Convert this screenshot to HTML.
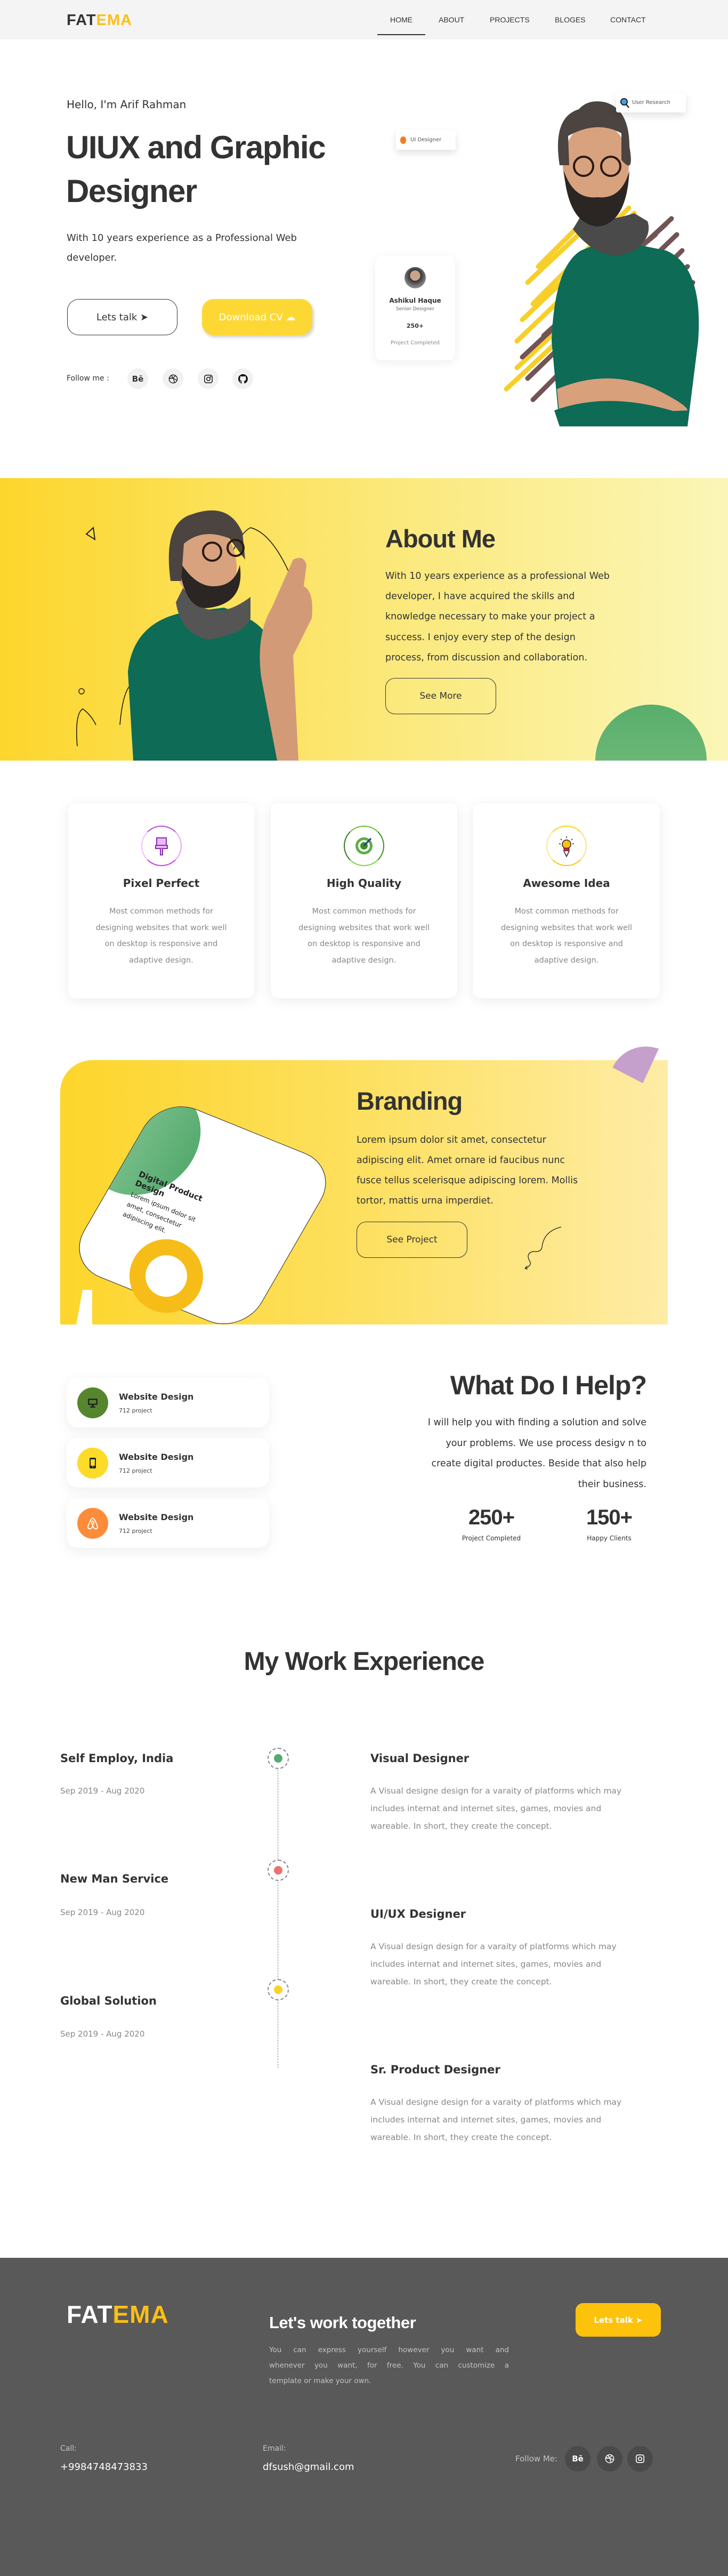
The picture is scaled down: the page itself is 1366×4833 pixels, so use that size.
<!DOCTYPE html>
<html><head><meta charset="utf-8">
<style>
*{box-sizing:border-box;margin:0;padding:0}
body{width:1366px;height:4833px;position:relative;background:#fff;font-family:"DejaVu Sans","Liberation Sans",sans-serif;color:#333;overflow:hidden}
.a{position:absolute}
.h{font-family:"Liberation Sans",sans-serif;font-weight:bold;color:#333;letter-spacing:-1px}
.nav a{position:absolute;top:29px;font-size:14px;color:#333;text-decoration:none;font-family:"Liberation Sans",sans-serif}
.btn{position:absolute;border:1.5px solid #333;border-radius:22px;display:flex;align-items:center;justify-content:center;font-size:18px;color:#333}
.soc{position:absolute;width:39px;height:39px;border-radius:50%;background:#f1f1f1;display:flex;align-items:center;justify-content:center;font-weight:bold;font-size:15px}
.card{position:absolute;background:#fff;border-radius:14px;box-shadow:0 4px 24px rgba(0,0,0,.08);text-align:center}
.card h3{position:absolute;left:0;right:0;top:138px;font-size:20px;font-family:"DejaVu Sans",sans-serif;font-weight:bold;color:#333}
.card p{position:absolute;left:0;right:0;top:188px;font-size:14.5px;line-height:30.5px;color:#888;white-space:nowrap}
.ring{position:absolute;left:137px;top:42px;width:76px;height:76px;border-radius:50%;border:2px solid}
.svc{position:absolute;left:125px;width:380px;height:93px;background:#fff;border-radius:20px;box-shadow:0 6px 24px rgba(0,0,0,.07)}
.svc .ic{position:absolute;left:20px;top:18px;width:58px;height:58px;border-radius:50%;display:flex;align-items:center;justify-content:center}
.svc b{position:absolute;left:98px;top:26px;font-size:16px;color:#333}
.svc span{position:absolute;left:98px;top:55px;font-size:11px;color:#444}
.tl{font-size:21px;font-weight:bold;color:#333;position:absolute}
.dt{font-size:15px;color:#888;position:absolute}
.ds{font-size:15.5px;line-height:33px;color:#888;position:absolute;white-space:nowrap}
.dot{position:absolute;left:502px;width:40px;height:40px;border-radius:50%;border:2px dashed #888;background:#fff}
.dot i{position:absolute;left:10px;top:10px;width:16px;height:16px;border-radius:50%}
.j{text-align:justify;text-align-last:justify}
</style></head><body>

<!-- NAV -->
<div class="a" style="left:0;top:0;width:1366px;height:74px;background:#f4f4f4"></div>
<div class="a" style="left:125px;top:22px;font-family:'Liberation Sans',sans-serif;font-weight:900;font-size:29px;letter-spacing:1px;color:#333;line-height:32px">FAT<span style="color:#fbbf16">EMA</span></div>
<div class="nav">
<a style="left:732px">HOME</a><a style="left:823px">ABOUT</a><a style="left:919px">PROJECTS</a><a style="left:1041px">BLOGES</a><a style="left:1145px">CONTACT</a>
</div>
<div class="a" style="left:708px;top:64px;width:90px;height:2px;background:#333"></div>

<!-- HERO -->
<div class="a" style="left:125px;top:184px;font-size:20px;color:#333">Hello, I'm Arif Rahman</div>
<div class="a h" style="left:124px;top:236px;font-size:60px;line-height:82px;letter-spacing:-1.5px">UIUX and Graphic<br>Designer</div>
<div class="a" style="left:125px;top:428px;font-size:18px;line-height:37px;color:#333;white-space:nowrap">With 10 years experience as a Professional Web<br>developer.</div>
<div class="btn" style="left:126px;top:561px;width:207px;height:68px">Lets talk ➤</div>
<div class="btn" style="left:379px;top:561px;width:207px;height:68px;border:none;background:#fdd835;color:#fff;box-shadow:3px 4px 6px rgba(0,0,0,.18)">Download CV ☁</div>
<div class="a" style="left:125px;top:702px;font-size:14px;color:#333">Follow me :</div>
<div class="soc" style="left:239px;top:691px">Bē</div>
<div class="soc" style="left:305px;top:691px"><svg width="18" height="18" viewBox="0 0 20 20" fill="none" stroke="#222" stroke-width="1.6"><circle cx="10" cy="10" r="8.5"/><path d="M2 8c5 0 11 1 16 5M6 2.5c4 5 6 10 7 16M15 3c-3 4-8 6-13 6"/></svg></div>
<div class="soc" style="left:371px;top:691px"><svg width="18" height="18" viewBox="0 0 20 20" fill="none" stroke="#222" stroke-width="1.8"><rect x="2" y="2" width="16" height="16" rx="4"/><circle cx="10" cy="10" r="3.6"/><circle cx="14.5" cy="5.5" r=".6" fill="#222"/></svg></div>
<div class="soc" style="left:436px;top:691px"><svg width="18" height="18" viewBox="0 0 16 16"><path fill="#111" d="M8 0a8 8 0 00-2.5 15.6c.4 0 .5-.2.5-.4v-1.5c-2.2.5-2.7-1-2.7-1-.4-.9-.9-1.200-.9-1.2-.7-.5.1-.5.1-.5.8.1 1.2.8 1.2.8.7 1.3 1.9.9 2.3.7.1-.5.3-.9.5-1.1-1.8-.2-3.6-.9-3.6-4 0-.9.3-1.6.8-2.1-.1-.2-.4-1 .1-2.1 0 0 .7-.2 2.2.8a7.4 7.4 0 014 0c1.5-1 2.2-.8 2.2-.8.4 1.1.2 1.9.1 2.1.5.6.8 1.3.8 2.1 0 3.1-1.9 3.8-3.6 4 .3.3.6.8.6 1.5v2.2c0 .2.1.5.6.4A8 8 0 008 0z"/></svg></div>

<!-- hero person -->
<svg class="a" style="left:850px;top:170px" width="480" height="630" viewBox="0 0 480 630">
<g stroke-linecap="round" stroke-width="9" opacity=".95">
<path d="M130 430L340 230M120 470L350 250M150 400L330 220M140 360L310 200M160 330L300 190M120 520L260 390M100 560L240 430" stroke="#f8cd1e"/>
<path d="M130 500L410 240M140 540L420 270M150 580L430 300M170 460L400 250M200 420L380 270M280 460L440 330M300 500L450 360" stroke="#6b4a4e"/>
</g>
<path d="M200 630L185 470Q190 330 240 300L290 280Q320 290 350 290L400 300Q470 330 460 470L440 630Z" fill="#0d6b56"/>
<path d="M195 560Q290 520 380 560Q440 590 440 600L200 610Z" fill="#d9a07c"/>
<path d="M190 600Q300 560 440 610L440 630L200 630Z" fill="#0d6b56"/>
<path d="M225 260Q280 330 340 300Q375 275 365 245L340 230Q280 250 240 235Z" fill="#4a4a4a"/>
<ellipse cx="268" cy="140" rx="62" ry="82" fill="#d8a27f"/>
<path d="M208 150Q216 250 271 255Q326 250 331 150Q316 205 271 200Q226 205 208 150Z" fill="#2b2523"/>
<path d="M200 140Q186 50 236 35Q254 15 286 22Q331 35 331 105Q341 160 316 130L316 80Q271 55 216 85L218 140Z" fill="#4b4440"/>
<circle cx="245" cy="142" r="18" fill="none" stroke="#2a1a12" stroke-width="4"/>
<circle cx="296" cy="142" r="18" fill="none" stroke="#2a1a12" stroke-width="4"/>
</svg>

<!-- hero floating cards -->
<div class="a" style="left:743px;top:244px;width:112px;height:37px;background:#fff;border-radius:4px;box-shadow:0 6px 14px rgba(0,0,0,.12);font-size:10px;color:#555;display:flex;align-items:center;padding-left:8px"><i style="width:11px;height:14px;border-radius:50%;background:#f47a20;margin-right:8px;display:inline-block"></i>UI Designer</div>
<div class="a" style="left:1156px;top:174px;width:131px;height:37px;background:#fff;border-radius:4px;box-shadow:0 6px 14px rgba(0,0,0,.12);font-size:10px;color:#555;display:flex;align-items:center;padding-left:8px"><svg width="18" height="20" viewBox="0 0 18 20" style="margin-right:4px"><circle cx="7" cy="8" r="6" fill="#3fa1e8" stroke="#222" stroke-width="2"/><path d="M11 13l5 6" stroke="#222" stroke-width="2.5"/></svg>User Research</div>
<div class="a" style="left:704px;top:480px;width:150px;height:196px;background:#fff;border-radius:12px;box-shadow:0 4px 18px rgba(0,0,0,.07);text-align:center">
<div style="width:40px;height:40px;border-radius:50%;background:radial-gradient(circle at 50% 40%,#c9a38a 0 30%,#333 32%,#888 70%);margin:21px auto 0"></div>
<div style="font-size:12px;font-weight:bold;margin-top:16px">Ashikul Haque</div>
<div style="font-size:9px;color:#666;margin-top:4px">Senior Designer</div>
<div style="font-size:11px;font-weight:bold;margin-top:20px">250+</div>
<div style="font-size:10px;color:#888;margin-top:20px">Project Completed</div>
</div>

<!-- ABOUT -->
<div class="a" style="left:0;top:897px;width:1366px;height:530px;background:linear-gradient(90deg,#fdd62c,#fbe97c 55%,#fbf6b8)"></div>
<svg class="a" style="left:130px;top:940px" width="540" height="487" viewBox="0 0 540 487">
<path d="M45 50L32 62L48 72Z" fill="none" stroke="#222" stroke-width="2"/>
<circle cx="23" cy="357" r="5" fill="none" stroke="#222" stroke-width="1.5"/>
<path d="M15 460Q10 400 25 390Q40 400 50 420M300 110Q320 60 340 50Q380 60 415 140M95 420Q100 360 115 345" fill="none" stroke="#111" stroke-width="1.5"/>
<path d="M120 487L110 320Q120 230 210 210L290 200Q350 220 370 250L400 320L390 487Z" fill="#0d6b56"/>
<path d="M390 487L360 330Q350 250 380 200L420 110Q440 100 445 120L440 160Q460 170 455 220L420 290L430 487Z" fill="#d39a78"/>
<path d="M200 190Q210 250 260 260Q330 250 340 220L340 180Q300 210 270 205Q230 200 215 160Z" fill="#555"/>
<ellipse cx="255" cy="115" rx="58" ry="78" fill="#d8a27f" transform="rotate(-12 255 115)"/>
<path d="M205 110Q215 210 265 200Q330 190 320 120Q310 160 270 160Q235 160 205 110Z" fill="#2b2523"/>
<path d="M190 150Q175 40 230 25Q300 0 325 60L330 110L300 70Q250 50 215 80L210 150Z" fill="#4b4440"/>
<circle cx="268" cy="95" r="17" fill="none" stroke="#2a1a12" stroke-width="4"/>
<circle cx="312" cy="88" r="15" fill="none" stroke="#2a1a12" stroke-width="4"/>
</svg>
<div class="a h" style="left:723px;top:983px;font-size:47px">About Me</div>
<div class="a" style="left:723px;top:1062px;font-size:17.5px;line-height:38.2px;color:#333;white-space:nowrap">With 10 years experience as a professional Web<br>developer, I have acquired the skills and<br>knowledge necessary to make your project a<br>success. I enjoy every step of the design<br>process, from discussion and collaboration.</div>
<div class="btn" style="left:723px;top:1272px;width:208px;height:68px;border-radius:18px;font-size:17px">See More</div>
<div class="a" style="left:1117px;top:1322px;width:209px;height:210px;border-radius:50%;background:linear-gradient(#58ae6c,#7ebf7f);clip-path:inset(0 0 105px 0)"></div>

<!-- FEATURE CARDS -->
<div class="card" style="left:128px;top:1507px;width:349px;height:366px">
<div class="ring" style="border-color:#b84fd6 #e7a3f2 #c042e0 #f0c0f6"></div>
<svg class="a" style="left:160px;top:63px" width="30" height="36" viewBox="0 0 30 36"><rect x="6" y="2" width="18" height="14" fill="#e9b8f5" stroke="#8a2fb0" stroke-width="2"/><rect x="4" y="16" width="22" height="6" fill="#e9b8f5" stroke="#8a2fb0" stroke-width="2"/><path d="M13 22v12h4V22" fill="#e9b8f5" stroke="#8a2fb0" stroke-width="2"/></svg>
<h3>Pixel Perfect</h3>
<p>Most common methods for<br>designing websites that work well<br>on desktop is responsive and<br>adaptive design.</p></div>
<div class="card" style="left:508px;top:1507px;width:350px;height:366px">
<div class="ring" style="border-color:#6bbf3a #3d8f20 #7fd04a #2f7a1a"></div>
<svg class="a" style="left:155px;top:60px" width="40" height="40" viewBox="0 0 40 40"><circle cx="20" cy="20" r="16" fill="#5ab046"/><circle cx="20" cy="20" r="11" fill="#fff"/><circle cx="20" cy="20" r="7" fill="#3e8e2a"/><path d="M20 20L33 6" stroke="#2b3a8a" stroke-width="3"/></svg>
<h3>High Quality</h3>
<p>Most common methods for<br>designing websites that work well<br>on desktop is responsive and<br>adaptive design.</p></div>
<div class="card" style="left:888px;top:1507px;width:350px;height:366px">
<div class="ring" style="border-color:#ffd21a #f7e08a #fbc70a #fde98f"></div>
<svg class="a" style="left:158px;top:58px" width="34" height="44" viewBox="0 0 34 44"><path d="M17 4v3M6 9l2 2M28 9l-2 2M3 18h3M28 18h3" stroke="#222" stroke-width="1.5"/><circle cx="17" cy="19" r="8" fill="#fbbf16" stroke="#222" stroke-width="1.5"/><rect x="12" y="26" width="10" height="6" fill="#c23" stroke="#222"/><path d="M12 32l5 10 5-10" fill="#fff" stroke="#222" stroke-width="1.5"/></svg>
<h3>Awesome Idea</h3>
<p>Most common methods for<br>designing websites that work well<br>on desktop is responsive and<br>adaptive design.</p></div>

<!-- BRANDING -->
<div class="a" style="left:113px;top:1989px;width:1140px;height:496px;border-radius:60px 0 0 0;background:linear-gradient(90deg,#fdd52b,#fde060 50%,#feeca6)"></div>
<div class="a" style="left:1150px;top:1958px;width:80px;height:70px;background:#c6a0cc;border-radius:70px 0 0 0;transform:rotate(12deg);clip-path:polygon(0 0,100% 0,80% 100%,0 75%)"></div>
<div class="a" style="left:113px;top:2420px;width:60px;height:66px;background:#fff;clip-path:polygon(70% 0,100% 0,100% 100%,50% 100%)"></div>
<div class="a" style="left:200px;top:2100px;width:360px;height:360px;background:#fff;border:1.5px solid #222;border-radius:70px;transform:rotate(22deg) skewX(-8deg);overflow:hidden">
<div style="position:absolute;left:-90px;top:-20px;width:200px;height:220px;border-radius:50%;background:linear-gradient(90deg,#8cc89a,#55ab6e)"></div>
</div>
<div class="a" style="left:240px;top:2220px;width:160px;font-size:15px;font-weight:bold;color:#222;transform:rotate(22deg);line-height:18px">Digital Product Design<div style="font-size:12px;font-weight:normal;line-height:20px;margin-top:4px">Lorem ipsum dolor sit amet, consectetur adipiscing elit.</div></div>
<div class="a" style="left:243px;top:2325px;width:138px;height:138px;border-radius:50%;border:30px solid #f6bc18"></div>
<div class="a h" style="left:669px;top:2038px;font-size:47px">Branding</div>
<div class="a" style="left:669px;top:2120px;font-size:17.5px;line-height:38px;color:#333;white-space:nowrap">Lorem ipsum dolor sit amet, consectetur<br>adipiscing elit. Amet ornare id faucibus nunc<br>fusce tellus scelerisque adipiscing lorem. Mollis<br>tortor, mattis urna imperdiet.</div>
<div class="btn" style="left:669px;top:2292px;width:208px;height:68px;border-radius:18px;font-size:17px">See Project</div>
<svg class="a" style="left:975px;top:2300px" width="80" height="85" viewBox="0 0 80 85"><path d="M78 2Q45 10 42 40Q40 50 25 48Q10 52 20 68Q22 75 10 80" fill="none" stroke="#222" stroke-width="1.3"/><path d="M10 80l4-5M10 80l5 1" stroke="#222" stroke-width="1.3"/></svg>

<!-- WHAT DO I HELP -->
<div class="svc" style="top:2585px"><div class="ic" style="background:#55862e"><svg width="22" height="22" viewBox="0 0 22 22"><rect x="2" y="3" width="18" height="12" rx="2" fill="#222"/><rect x="4.5" y="5.5" width="13" height="7" fill="#55862e"/><rect x="9" y="15" width="4" height="3" fill="#222"/><rect x="6" y="18" width="10" height="2" fill="#222"/></svg></div><b>Website Design</b><span>712 project</span></div>
<div class="svc" style="top:2698px"><div class="ic" style="background:#fddb2a"><svg width="16" height="22" viewBox="0 0 16 22"><rect x="2" y="1" width="12" height="20" rx="2" fill="#222"/><rect x="4" y="4" width="8" height="12" fill="#fddb2a"/><circle cx="8" cy="18" r="1" fill="#fddb2a"/></svg></div><b>Website Design</b><span>712 project</span></div>
<div class="svc" style="top:2811px"><div class="ic" style="background:#fd8c3a"><svg width="26" height="26" viewBox="0 0 26 26" fill="none" stroke="#fff" stroke-width="2"><path d="M13 3C10 3 4 18 4 20c0 3 3 4 5 3 2-1 4-4 4-6 0-2-2-3-2-5s1-3 2-3 2 1 2 3-2 3-2 5 2 5 4 6c2 1 5 0 5-3 0-2-6-17-9-17z"/></svg></div><b>Website Design</b><span>712 project</span></div>

<div class="a h" style="right:153px;top:2570px;font-size:50px;text-align:right">What Do I Help?</div>
<div class="a" style="right:153px;top:2650px;font-size:17.5px;line-height:38.5px;color:#333;text-align:right;white-space:nowrap">I will help you with finding a solution and solve<br>your problems. We use process desigv n to<br>create digital productes. Beside that also help<br>their business.</div>
<div class="a h" style="left:852px;top:2825px;width:140px;text-align:center;font-size:40px">250+</div>
<div class="a" style="left:832px;top:2879px;width:180px;text-align:center;font-size:12px;color:#333">Project Completed</div>
<div class="a h" style="left:1073px;top:2825px;width:140px;text-align:center;font-size:40px">150+</div>
<div class="a" style="left:1073px;top:2879px;width:140px;text-align:center;font-size:12px;color:#333">Happy Clients</div>

<!-- WORK EXPERIENCE -->
<div class="a h" style="left:0;width:1366px;top:3090px;text-align:center;font-size:48px">My Work Experience</div>
<div class="a" style="left:521px;top:3300px;height:580px;border-left:1.5px dashed #888"></div>
<div class="dot" style="top:3279px"><i style="background:#55ab6e"></i></div>
<div class="dot" style="top:3489px"><i style="background:#ee6f6f"></i></div>
<div class="dot" style="top:3713px"><i style="background:#fbd02a"></i></div>

<div class="tl" style="left:113px;top:3287px">Self Employ, India</div>
<div class="dt" style="left:113px;top:3351px">Sep 2019 - Aug 2020</div>
<div class="tl" style="left:113px;top:3513px">New Man Service</div>
<div class="dt" style="left:113px;top:3579px">Sep 2019 - Aug 2020</div>
<div class="tl" style="left:113px;top:3742px">Global Solution</div>
<div class="dt" style="left:113px;top:3807px">Sep 2019 - Aug 2020</div>

<div class="tl" style="left:695px;top:3287px">Visual Designer</div>
<div class="ds" style="left:695px;top:3344px">A Visual designe design for a varaity of platforms which may<br>includes internat and internet sites, games, movies and<br>wareable. In short, they create the concept.</div>
<div class="tl" style="left:695px;top:3579px">UI/UX Designer</div>
<div class="ds" style="left:695px;top:3636px">A Visual design design for a varaity of platforms which may<br>includes internat and internet sites, games, movies and<br>wareable. In short, they create the concept.</div>
<div class="tl" style="left:695px;top:3871px">Sr. Product Designer</div>
<div class="ds" style="left:695px;top:3928px">A Visual designe design for a varaity of platforms which may<br>includes internat and internet sites, games, movies and<br>wareable. In short, they create the concept.</div>

<!-- FOOTER -->
<div class="a" style="left:0;top:4236px;width:1366px;height:597px;background:#595959"></div>
<div class="a" style="left:125px;top:4318px;font-family:'Liberation Sans',sans-serif;font-weight:900;font-size:46px;letter-spacing:1px;color:#fff;line-height:48px">FAT<span style="color:#fbbf16">EMA</span></div>
<div class="a" style="left:505px;top:4340px;font-family:'Liberation Sans',sans-serif;font-weight:bold;font-size:31px;color:#fff;letter-spacing:-.5px">Let's work together</div>
<div class="a" style="left:505px;top:4395px;width:450px;font-size:13.5px;line-height:29px;color:#c4c4c4">
<div class="j">You can express yourself however you want and</div>
<div class="j">whenever you want, for free. You can customize a</div>
<div>template or make your own.</div></div>
<div class="a" style="left:1080px;top:4321px;width:160px;height:63px;border-radius:14px;background:#fdc20c;color:#fff;font-size:15px;font-weight:bold;display:flex;align-items:center;justify-content:center">Lets talk ➤</div>
<div class="a" style="left:113px;top:4586px;font-size:14px;color:#c4c4c4">Call:</div>
<div class="a" style="left:113px;top:4618px;font-size:18px;color:#fff">+9984748473833</div>
<div class="a" style="left:493px;top:4586px;font-size:14px;color:#c4c4c4">Email:</div>
<div class="a" style="left:493px;top:4618px;font-size:18px;color:#fff">dfsush@gmail.com</div>
<div class="a" style="left:967px;top:4604px;font-size:15px;color:#c4c4c4">Follow Me:</div>
<div class="soc" style="left:1060px;top:4589px;width:48px;height:48px;background:#4a4a4a;color:#fff">Bē</div>
<div class="soc" style="left:1120px;top:4589px;width:48px;height:48px;background:#4a4a4a"><svg width="18" height="18" viewBox="0 0 20 20" fill="none" stroke="#fff" stroke-width="1.6"><circle cx="10" cy="10" r="8.5"/><path d="M2 8c5 0 11 1 16 5M6 2.5c4 5 6 10 7 16M15 3c-3 4-8 6-13 6"/></svg></div>
<div class="soc" style="left:1177px;top:4589px;width:48px;height:48px;background:#4a4a4a"><svg width="18" height="18" viewBox="0 0 20 20" fill="none" stroke="#fff" stroke-width="1.8"><rect x="2" y="2" width="16" height="16" rx="4"/><circle cx="10" cy="10" r="3.6"/></svg></div>
</body></html>
